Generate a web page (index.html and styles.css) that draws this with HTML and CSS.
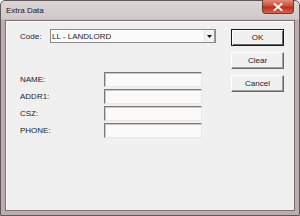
FILE: index.html
```html
<!DOCTYPE html>
<html>
<head>
<meta charset="utf-8">
<link rel="stylesheet" href="styles.css">
</head>
<body>
<div class="window">
  <div class="titlebar">
    <span class="title">Extra Data</span>
    <div class="close">
      <svg width="10" height="8" viewBox="0 0 10 8"><path d="M1.5 1 L8.5 7 M8.5 1 L1.5 7" stroke="#f4f0ee" stroke-width="2" stroke-linecap="square"/></svg>
    </div>
  </div>
  <div class="client">
    <div class="form">
      <div class="code-row">
        <span class="code-label">Code:</span>
        <div class="combo">
          <span class="combo-text">LL - LANDLORD</span>
          <span class="combo-btn"><svg width="5" height="3" viewBox="0 0 5 3"><path d="M0 0 H5 L2.5 3 Z" fill="#111"/></svg></span>
        </div>
      </div>
      <div class="fields">
        <div class="field-row"><span class="flabel">NAME:</span><div class="input"></div></div>
        <div class="field-row"><span class="flabel">ADDR1:</span><div class="input"></div></div>
        <div class="field-row"><span class="flabel">CSZ:</span><div class="input"></div></div>
        <div class="field-row"><span class="flabel">PHONE:</span><div class="input"></div></div>
      </div>
    </div>
    <div class="buttons">
      <div class="btn default"><span>OK</span></div>
      <div class="btn"><span>Clear</span></div>
      <div class="btn"><span>Cancel</span></div>
    </div>
  </div>
</div>
</body>
</html>
```
FILE: styles.css
```css
html, body {
  margin: 0;
  padding: 0;
  width: 300px;
  height: 216px;
  overflow: hidden;
  background: #ffffff;
}
.window {
  box-sizing: border-box;
  width: 300px;
  height: 216px;
  border: 1px solid #5e5858;
  border-radius: 5px 5px 0 0;
  background: linear-gradient(to bottom, #dcd6d6 0px, #d2c8c8 18px, #bcaeae 19px, #bcaeae 100%);
  display: flex;
  flex-direction: column;
  font-family: "Liberation Sans", Arial, sans-serif;
  font-size: 8px;
  color: #1c1c1c;
}
.titlebar {
  height: 18px;
  position: relative;
  display: flex;
  align-items: center;
  padding-left: 5px;
}
.title {
  font-size: 8px;
  color: #1a1a1a;
}
.close {
  position: absolute;
  right: 5px;
  top: -1px;
  width: 32px;
  height: 14px;
  box-sizing: border-box;
  border: 1px solid #6e3a34;
  border-top: none;
  border-radius: 0 0 4px 4px;
  background: linear-gradient(to bottom, #e28a78 0%, #cf4c38 45%, #bb2e1c 55%, #d4664e 100%);
  display: flex;
  align-items: center;
  justify-content: center;
}
.client {
  flex: 1;
  margin: 1px 4px 4px 4px;
  border: 1px solid #7d7070;
  background: #f0f0f0;
  display: flex;
  box-shadow: inset 1px 1px 0 #ffffff;
}
.form {
  padding: 8px 0 0 14px;
  display: flex;
  flex-direction: column;
}
.code-row {
  display: flex;
  align-items: center;
  height: 14px;
}
.code-label {
  width: 30px;
}
.combo {
  box-sizing: border-box;
  width: 166px;
  height: 14px;
  border: 1px solid #8a8a8a;
  background: #fbfbfb;
  display: flex;
  align-items: center;
  justify-content: space-between;
}
.combo-text {
  padding-left: 1px;
}
.combo-btn {
  width: 11px;
  height: 12px;
  box-sizing: border-box;
  border-left: 1px solid #e4e4e4;
  border-right: 1px solid #9a9a9a;
  background: #f2f2f2;
  display: flex;
  align-items: center;
  justify-content: center;
}
.fields {
  margin-top: 29px;
  display: flex;
  flex-direction: column;
  gap: 2px;
}
.field-row {
  display: flex;
  align-items: center;
  height: 15px;
}
.flabel {
  width: 84px;
}
.input {
  box-sizing: border-box;
  width: 98px;
  height: 15px;
  border-top: 1px solid #7a7a7a;
  border-left: 1px solid #7a7a7a;
  border-right: 1px solid #e8e8e8;
  border-bottom: 1px solid #e8e8e8;
  box-shadow: inset 1px 1px 0 #c8c8c8;
  background: #fbfaf9;
}
.buttons {
  margin-left: 15px;
  padding-top: 8px;
  display: flex;
  flex-direction: column;
  gap: 6px;
}
.btn {
  box-sizing: border-box;
  width: 53px;
  height: 17px;
  background: #f0f0f0;
  border-top: 1px solid #ffffff;
  border-left: 1px solid #ffffff;
  border-right: 1px solid #6a6a6a;
  border-bottom: 1px solid #6a6a6a;
  box-shadow: inset -1px -1px 0 #a0a0a0;
  display: flex;
  align-items: center;
  justify-content: center;
  font-size: 8px;
}
.btn.default {
  border: 1px solid #1a1a1a;
  box-shadow: inset 1px 1px 0 #ffffff, inset -1px -1px 0 #6a6a6a;
}
```
